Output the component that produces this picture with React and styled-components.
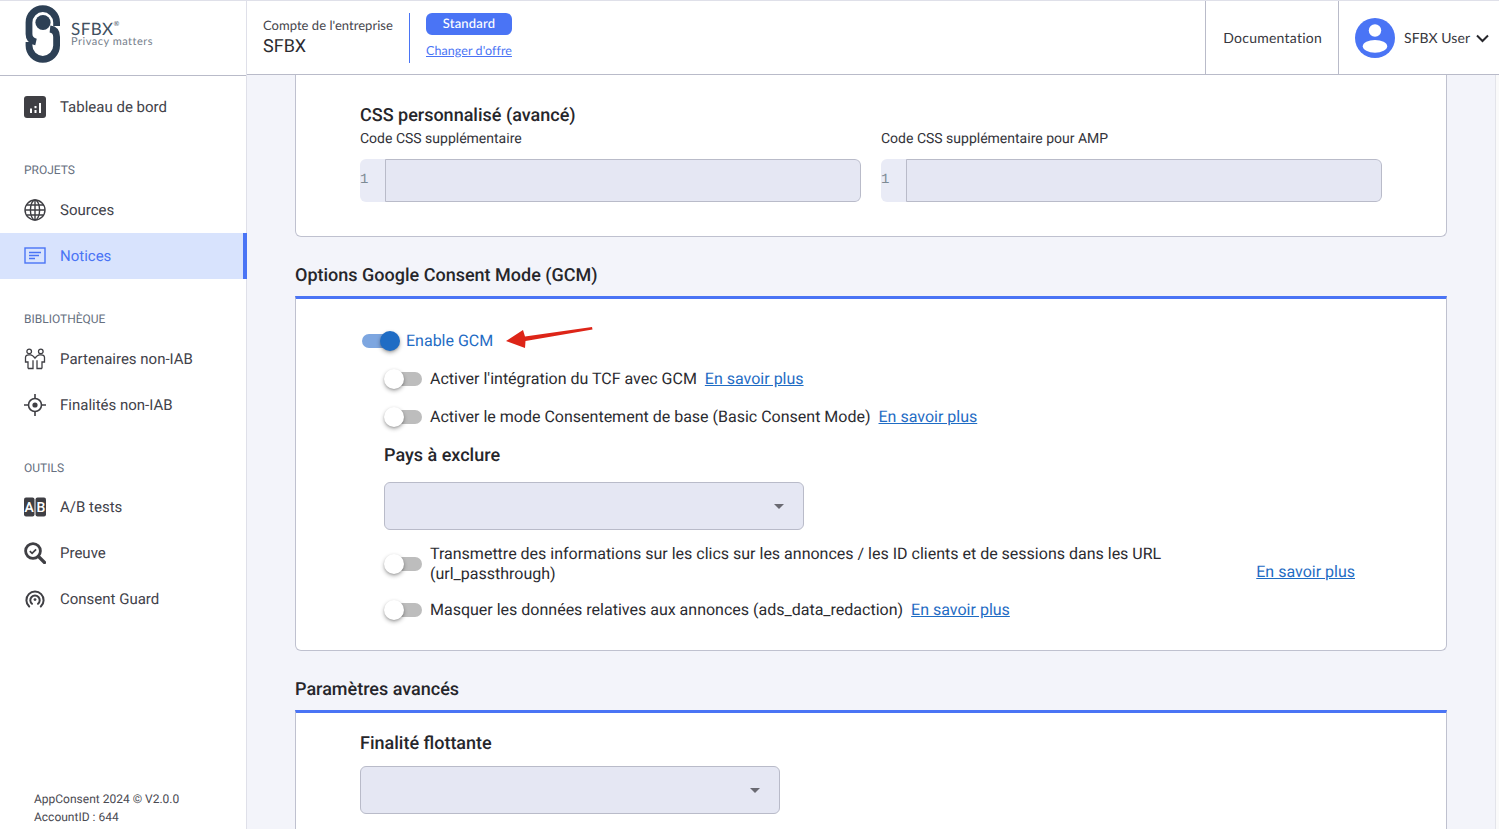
import React from "react";
import styled, { createGlobalStyle } from "styled-components";

const Global = createGlobalStyle`
  html, body { margin: 0; padding: 0; height: 100%; overflow: hidden; background: #fff; }
  body { font-family: Roboto, "Liberation Sans", sans-serif; color: #26262b; text-rendering: geometricPrecision; }
  * { box-sizing: border-box; }
`;

const Shell = styled.div`
  display: grid;
  grid-template-columns: 247px 1fr;
  width: 1499px;
  height: 829px;
  overflow: hidden;
  border-top: 1px solid #dfe0e9;
`;

const Sidebar = styled.aside`
  display: flex;
  flex-direction: column;
  border-right: 1px solid #dfe0e9;
  background: #fff;
  height: 828px;
`;

const Brand = styled.div`
  display: flex;
  align-items: flex-start;
  height: 75px;
  flex: none;
  padding: 4px 0 0 25px;
  border-bottom: 1px solid #b9bbc9;
  gap: 10px;
`;

const BrandText = styled.div`
  display: flex;
  flex-direction: column;
  font-family: Lato, sans-serif;
  color: #40505f;
  margin-top: 17px;
`;

const BrandName = styled.span`
  font-size: 17px;
  line-height: 14px;
  letter-spacing: 0.45px;
  position: relative;
  sup { font-size: 7px; position: absolute; top: -5px; margin-left: 0; }
`;

const BrandTag = styled.span`
  font-size: 11px;
  line-height: 11px;
  letter-spacing: 0.5px;
  color: #76808c;
`;

const NavGroup = styled.nav`
  display: flex;
  flex-direction: column;
  padding-top: ${(p) => p.$top}px;
`;

const NavLabel = styled.div`
  font-size: 12px;
  line-height: 14px;
  color: #667080;
  padding-left: 24px;
  margin-bottom: ${(p) => p.$gap}px;
`;

const NavItem = styled.div`
  display: flex;
  align-items: center;
  height: 46px;
  padding-left: 24px;
  gap: 14px;
  font-size: 15px;
  color: ${(p) => (p.$active ? "#4a74f5" : "#42424a")};
  background: ${(p) => (p.$active ? "#d8e3fd" : "transparent")};
  border-right: ${(p) => (p.$active ? "4px solid #4a74f5" : "none")};
  margin-right: ${(p) => (p.$active ? "-1px" : "0")};
  svg { flex: none; }
`;

const SideFooter = styled.div`
  margin-top: auto;
  padding: 0 0 3px 34px;
  font-size: 12px;
  line-height: 18px;
  color: #4a4a52;
`;

const Right = styled.div`
  display: flex;
  flex-direction: column;
  min-width: 0;
  height: 828px;
`;

const TopBar = styled.header`
  display: flex;
  align-items: stretch;
  height: 74px;
  flex: none;
  background: #fff;
  border-bottom: 1px solid #b9bbc9;
  font-family: Lato, sans-serif;
`;

const Account = styled.div`
  display: flex;
  flex-direction: column;
  padding: 16px 0 0 16px;
  width: 162px;
`;

const AccountLabel = styled.span`
  font-size: 13px;
  line-height: 16px;
  letter-spacing: 0.03px;
  color: #45454c;
  white-space: nowrap;
`;

const AccountName = styled.span`
  font-family: Roboto, sans-serif;
  font-size: 18px;
  line-height: 26px;
  margin-top: 1px;
  color: #2b2b30;
`;

const Plan = styled.div`
  display: flex;
  flex-direction: column;
  align-items: stretch;
  align-self: flex-start;
  margin-top: 12px;
  height: 50px;
  padding-left: 16px;
  border-left: 1px solid #4a74f5;
`;

const Badge = styled.span`
  height: 22px;
  width: 86px;
  border-radius: 6px;
  background: #4a74f5;
  color: #fff;
  font-size: 13px;
  font-weight: 500;
  line-height: 21px;
  text-align: center;
  letter-spacing: 0.2px;
`;

const PlanLink = styled.a`
  margin-top: 8px;
  font-size: 12.5px;
  line-height: 16px;
  letter-spacing: 0.07px;
  color: #4a74f5;
  text-decoration: underline;
  white-space: nowrap;
`;

const TopSpacer = styled.div`
  flex: 1;
`;

const TopCell = styled.div`
  display: flex;
  align-items: center;
  padding: 0 16px 0 17px;
  border-left: 1px solid #b9bbc9;
  font-size: 14px;
  letter-spacing: 0.24px;
  color: #37373d;
`;

const UserCell = styled(TopCell)`
  width: 161px;
  padding: 0 0 0 16px;
  gap: 9px;
  letter-spacing: 0.05px;
  svg { flex: none; }
`;

const Chevron = styled.svg`
  margin-left: -3px;
`;

const Below = styled.div`
  display: flex;
  flex: 1;
  min-height: 0;
  overflow: hidden;
`;

const Content = styled.main`
  flex: 1;
  padding: 0 48px;
  background: #f3f4fa;
  border-right: 1px solid #e3e4ea;
`;

const ScrollTrack = styled.div`
  width: 3px;
  background: #fafafa;
`;

const Card = styled.section`
  background: #fff;
  border: 1px solid #bfc1cf;
  border-top: ${(p) => (p.$accent ? "3px solid #4a74f5" : "none")};
  border-radius: ${(p) => (p.$open ? "0" : "0 0 6px 6px")};
`;

const CssCard = styled(Card)`
  height: 162px;
  padding: 30px 64px 0;
`;

const SubTitle = styled.h3`
  margin: 0;
  font-size: 18px;
  font-weight: 500;
  line-height: 22px;
  color: #26262b;
`;

const SectionTitle = styled.h2`
  margin: 28px 0 9px;
  font-size: 18px;
  font-weight: 500;
  line-height: 22px;
  color: #26262b;
`;

const EditorGrid = styled.div`
  display: grid;
  grid-template-columns: 1fr 1fr;
  gap: 20px;
`;

const FieldLabel = styled.label`
  display: block;
  font-size: 14px;
  line-height: 24px;
  margin-bottom: 8px;
  color: #33333a;
`;

const Editor = styled.div`
  display: flex;
  height: 43px;
  border-radius: 6px;
  overflow: hidden;
  background: #e9ebf6;
`;

const Gutter = styled.div`
  width: 25px;
  flex: none;
  padding-top: 13px;
  font-family: "Liberation Mono", monospace;
  font-size: 14px;
  line-height: 16px;
  color: #7d8a94;
`;

const EditorBody = styled.div`
  flex: 1;
  background: #e5e7f3;
  border: 1px solid #b9bbc9;
  border-radius: 0 6px 6px 0;
`;

const GcmCard = styled(Card)`
  height: 355px;
  padding: 23px 0 0 66px;
`;

const Row = styled.div`
  position: relative;
  display: flex;
  align-items: center;
  min-height: 38px;
  gap: ${(p) => (p.$top ? 6 : 8)}px;
  margin-left: ${(p) => (p.$top ? 0 : 22)}px;
  margin-top: ${(p) => p.$mt || 0}px;
  font-size: 16px;
  line-height: 20px;
  color: ${(p) => (p.$top ? "#1f6cc4" : "#2b2b30")};
`;

const SwitchBox = styled.span`
  position: relative;
  flex: none;
  width: 38px;
  height: 20px;
`;

const SwitchTrack = styled.span`
  position: absolute;
  top: 3px;
  height: 14px;
  width: 34px;
  border-radius: 7px;
  left: ${(p) => (p.$on ? 0 : 4)}px;
  background: ${(p) => (p.$on ? "#7da6e0" : "#bdbdbd")};
`;

const SwitchThumb = styled.span`
  position: absolute;
  top: 0;
  width: 20px;
  height: 20px;
  border-radius: 50%;
  left: ${(p) => (p.$on ? 18 : 0)}px;
  background: ${(p) => (p.$on ? "#1f6cc4" : "#fff")};
  box-shadow: 0 2px 4px rgba(0,0,0,.3), 0 1px 2px rgba(0,0,0,.14);
`;

const Switch = ({ on }) => (
  <SwitchBox>
    <SwitchTrack $on={on} />
    <SwitchThumb $on={on} />
  </SwitchBox>
);

const MoreLink = styled.a`
  color: #1f6cc4;
  text-decoration: underline;
  margin-left: ${(p) => (p.$push ? "auto" : 0)};
  margin-bottom: ${(p) => (p.$push ? "2px" : 0)};
  align-self: ${(p) => (p.$push ? "flex-end" : "auto")};
  white-space: nowrap;
`;

const RowText = styled.span`
  display: block;
  width: ${(p) => (p.$wide ? "770px" : "auto")};
`;

const WideRow = styled(Row)`
  width: 971px;
`;

const Arrow = styled.svg`
  position: absolute;
  left: 143px;
  top: 4px;
`;

const BlockTitle = styled(SubTitle)`
  margin-left: 22px;
  margin-top: 9px;
`;

const Select = styled.div`
  position: relative;
  width: 420px;
  height: 48px;
  margin-left: ${(p) => p.$ml || 0}px;
  margin-top: ${(p) => p.$mt}px;
  background: #e5e7f3;
  border: 1px solid #b9bbc9;
  border-radius: 6px;
  &::after {
    content: "";
    position: absolute;
    right: 19px;
    top: 21px;
    border-left: 5px solid transparent;
    border-right: 5px solid transparent;
    border-top: 5px solid #6a6a72;
  }
`;

const AdvCard = styled(Card)`
  height: 200px;
  padding: 20px 0 0 64px;
`;

/* icons */
const DashIcon = () => (
  <svg width="22" height="22" viewBox="0 0 22 22">
    <rect width="22" height="22" rx="3" fill="#3f3f44" />
    <rect x="6" y="12.5" width="2" height="4.5" fill="#fff" />
    <rect x="10.5" y="10" width="2" height="2.2" fill="#fff" />
    <rect x="10.5" y="14" width="2" height="3" fill="#fff" />
    <rect x="15" y="7" width="2" height="10" fill="#fff" />
  </svg>
);
const GlobeIcon = () => (
  <svg width="22" height="22" viewBox="0 0 22 22" fill="none" stroke="#3f3f44" strokeWidth="1.4">
    <circle cx="11" cy="11" r="10" />
    <ellipse cx="11" cy="11" rx="4.6" ry="10" />
    <path d="M11 1v20M1 11h20M2.4 6h17.2M2.4 16h17.2" />
  </svg>
);
const NoticeIcon = () => (
  <svg width="22" height="22" viewBox="0 0 22 22" fill="none" stroke="#4a74f5">
    <rect x="1" y="3" width="20" height="15" strokeWidth="1.4" />
    <path d="M5 7.5h12M5 10.5h10M5 13.5h6" strokeWidth="1.4" />
  </svg>
);
const PartnersIcon = () => (
  <svg width="22" height="22" viewBox="0 0 22 22" fill="none" stroke="#3f3f44" strokeWidth="1.3">
    <circle cx="5.2" cy="3.4" r="2.3" />
    <circle cx="16.8" cy="3.4" r="2.3" />
    <path d="M4 20.5V14H1.5V9.5C1.5 7.5 3 6.8 5 6.8H6.5C8.5 6.8 9.4 8 11 10.2C12.6 8 13.5 6.8 15.5 6.8H17C19 6.8 20.5 7.5 20.5 9.5V14H18V20.5" />
    <path d="M4 20.5H9V12.2M18 20.5H13V12.2" />
  </svg>
);
const TargetIcon = () => (
  <svg width="22" height="22" viewBox="0 0 22 22" fill="none" stroke="#3f3f44" strokeWidth="1.6">
    <circle cx="11" cy="11" r="6.5" />
    <circle cx="11" cy="11" r="2.6" fill="#3f3f44" stroke="none" />
    <path d="M11 0v5M11 17v5M0 11h5M17 11h5" />
  </svg>
);
const AbIcon = () => (
  <svg width="22" height="20" viewBox="0 0 22 20">
    <rect x="0" y="0.5" width="10.5" height="19" rx="2" fill="#3f3f44" />
    <rect x="11.5" y="0.5" width="10.5" height="19" rx="2" fill="#3f3f44" />
    <text x="5.2" y="15" textAnchor="middle" fontFamily="Roboto" fontWeight="500" fontSize="14" fill="#fff">A</text>
    <text x="16.8" y="15" textAnchor="middle" fontFamily="Roboto" fontWeight="500" fontSize="14" fill="#fff">B</text>
  </svg>
);
const ProofIcon = () => (
  <svg width="22" height="22" viewBox="0 0 22 22" fill="none" stroke="#3f3f44">
    <circle cx="9" cy="9" r="7.4" strokeWidth="2.8" />
    <path d="M14.5 14.5L20.5 20.5" strokeWidth="3.2" strokeLinecap="round" />
    <path d="M5.8 9.2l2.3 2.2 4-4" strokeWidth="1.7" />
  </svg>
);
const GuardIcon = () => (
  <svg width="22" height="22" viewBox="0 0 22 22" fill="none" stroke="#3f3f44" strokeWidth="2" strokeLinecap="round">
    <path d="M5.2 18.5A8.6 8.6 0 1 1 16.8 18.5" />
    <path d="M8 15.8A4.7 4.7 0 1 1 14 15.8" />
    <circle cx="11" cy="11.6" r="1.4" fill="#3f3f44" stroke="none" />
  </svg>
);

const Logo = () => (
  <svg width="36" height="58" viewBox="0 0 36 58" fill="none" stroke="#2d4055" strokeWidth="6.8">
    <path d="M31.6 21V17.5A13.8 13.8 0 0 0 4 17.5V29C4 33.5 6.5 36 11 37" />
    <path d="M25 24C29.5 24.5 31.6 27.5 31.6 32V40.5A13.8 13.8 0 0 1 4 40.5V37" />
    <circle cx="18" cy="17.5" r="7.6" fill="#2d4055" stroke="none" />
  </svg>
);

const nav = [
  { label: "PROJETS", top: 33, gap: 10, items: [["Sources", GlobeIcon], ["Notices", NoticeIcon, true]] },
  { label: "BIBLIOTHÈQUE", top: 33, gap: 10, items: [["Partenaires non-IAB", PartnersIcon], ["Finalités non-IAB", TargetIcon]] },
  { label: "OUTILS", top: 33, gap: 9, items: [["A/B tests", AbIcon], ["Preuve", ProofIcon], ["Consent Guard", GuardIcon]] },
];

export default function App() {
  return (
    <>
      <Global />
      <Shell>
        <Sidebar>
          <Brand>
            <Logo />
            <BrandText>
              <BrandName>SFBX<sup>®</sup></BrandName>
              <BrandTag>Privacy matters</BrandTag>
            </BrandText>
          </Brand>
          <NavGroup $top={8}>
            <NavItem><DashIcon />Tableau de bord</NavItem>
          </NavGroup>
          {nav.map((g) => (
            <NavGroup key={g.label} $top={g.top}>
              <NavLabel $gap={g.gap}>{g.label}</NavLabel>
              {g.items.map(([t, Icon, active]) => (
                <NavItem key={t} $active={active}><Icon />{t}</NavItem>
              ))}
            </NavGroup>
          ))}
          <SideFooter>
            AppConsent 2024 © V2.0.0<br />AccountID : 644
          </SideFooter>
        </Sidebar>
        <Right>
          <TopBar>
            <Account>
              <AccountLabel>Compte de l'entreprise</AccountLabel>
              <AccountName>SFBX</AccountName>
            </Account>
            <Plan>
              <Badge>Standard</Badge>
              <PlanLink>Changer d'offre</PlanLink>
            </Plan>
            <TopSpacer />
            <TopCell>Documentation</TopCell>
            <UserCell>
              <svg width="40" height="40" viewBox="0 0 40 40">
                <circle cx="20" cy="20" r="20" fill="#4a74f5" />
                <circle cx="20" cy="12.5" r="6.2" fill="#fff" />
                <ellipse cx="20" cy="28.3" rx="12.2" ry="6.4" fill="#fff" />
              </svg>
              SFBX User
              <Chevron width="14" height="14" viewBox="0 0 14 14" fill="none" stroke="#26262b" strokeWidth="2">
                <path d="M1 4.5L6.5 10L12 4.5" />
              </Chevron>
            </UserCell>
          </TopBar>
          <Below>
            <Content>
              <CssCard>
                <SubTitle>CSS personnalisé (avancé)</SubTitle>
                <EditorGrid>
                  {["Code CSS supplémentaire", "Code CSS supplémentaire pour AMP"].map((l) => (
                    <div key={l}>
                      <FieldLabel>{l}</FieldLabel>
                      <Editor>
                        <Gutter>1</Gutter>
                        <EditorBody />
                      </Editor>
                    </div>
                  ))}
                </EditorGrid>
              </CssCard>

              <SectionTitle>Options Google Consent Mode (GCM)</SectionTitle>
              <GcmCard $accent>
                <Row $top>
                  <Switch on />
                  Enable GCM
                  <Arrow width="88" height="24" viewBox="0 0 88 24">
                    <polygon points="1,15 18,4 20,10.5 87,1 87.5,3.5 20.5,15 20,22" fill="#dd2518" />
                  </Arrow>
                </Row>
                <Row>
                  <Switch />
                  <RowText>Activer l'intégration du TCF avec GCM</RowText>
                  <MoreLink>En savoir plus</MoreLink>
                </Row>
                <Row>
                  <Switch />
                  <RowText>Activer le mode Consentement de base (Basic Consent Mode)</RowText>
                  <MoreLink>En savoir plus</MoreLink>
                </Row>
                <BlockTitle>Pays à exclure</BlockTitle>
                <Select $ml={22} $mt={15} />
                <WideRow $mt={14}>
                  <Switch />
                  <RowText $wide>Transmettre des informations sur les clics sur les annonces / les ID clients et de sessions dans les URL (url_passthrough)</RowText>
                  <MoreLink $push>En savoir plus</MoreLink>
                </WideRow>
                <Row $mt={7}>
                  <Switch />
                  <RowText>Masquer les données relatives aux annonces (ads_data_redaction)</RowText>
                  <MoreLink>En savoir plus</MoreLink>
                </Row>
              </GcmCard>

              <SectionTitle>Paramètres avancés</SectionTitle>
              <AdvCard $accent $open>
                <SubTitle>Finalité flottante</SubTitle>
                <Select $mt={11} />
              </AdvCard>
            </Content>
            <ScrollTrack />
          </Below>
        </Right>
      </Shell>
    </>
  );
}
